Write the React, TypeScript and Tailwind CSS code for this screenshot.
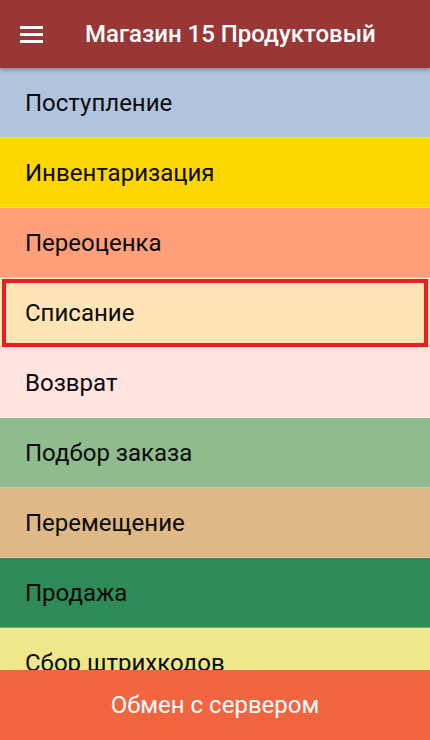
import React from "react";

const rows: { label: string; bg: string; selected?: boolean }[] = [
  { label: "Поступление", bg: "bg-[#b0c4de]" },
  { label: "Инвентаризация", bg: "bg-[#ffd700]" },
  { label: "Переоценка", bg: "bg-[#ffa07a]" },
  { label: "Списание", bg: "bg-[#ffe4b5]", selected: true },
  { label: "Возврат", bg: "bg-[#ffe4e1]" },
  { label: "Подбор заказа", bg: "bg-[#8fbc8f]" },
  { label: "Перемещение", bg: "bg-[#deb887]" },
  { label: "Продажа", bg: "bg-[#2e8b57]" },
  { label: "Сбор штрихкодов", bg: "bg-[#f0e68c]" },
];

export default function App() {
  return (
    <div
      className="flex flex-col h-[740px] w-[430px] overflow-hidden bg-white"
      style={{ fontFamily: "Roboto, 'Noto Sans', sans-serif" }}
    >
      <header className="relative z-10 flex h-[68px] shrink-0 items-center bg-[#993737] shadow-[0_2px_4px_rgba(0,0,0,0.3)]">
        <div className="ml-[20px] flex w-[23px] flex-col gap-[4px]">
          <span className="block h-[3px] w-full bg-white" />
          <span className="block h-[3px] w-full bg-white" />
          <span className="block h-[3px] w-full bg-white" />
        </div>
        <h1 className="ml-[42px] text-[24px] font-medium text-white">
          Магазин 15 Продуктовый
        </h1>
      </header>
      <div className="flex-1 overflow-hidden">
        {rows.map((r) => (
          <div
            key={r.label}
            className={`relative flex h-[70px] items-center border-b border-white/30 pl-[25px] text-[24px] text-[#0a0a0a] ${r.bg}`}
          >
            {r.label}
            {r.selected && (
              <div className="pointer-events-none absolute top-[1px] bottom-[0px] left-[2px] right-[2px] border-4 border-[#ed1c24]" />
            )}
          </div>
        ))}
      </div>
      <button className="h-[70px] shrink-0 bg-[#f36441] text-[24px] text-white">
        Обмен с сервером
      </button>
    </div>
  );
}
